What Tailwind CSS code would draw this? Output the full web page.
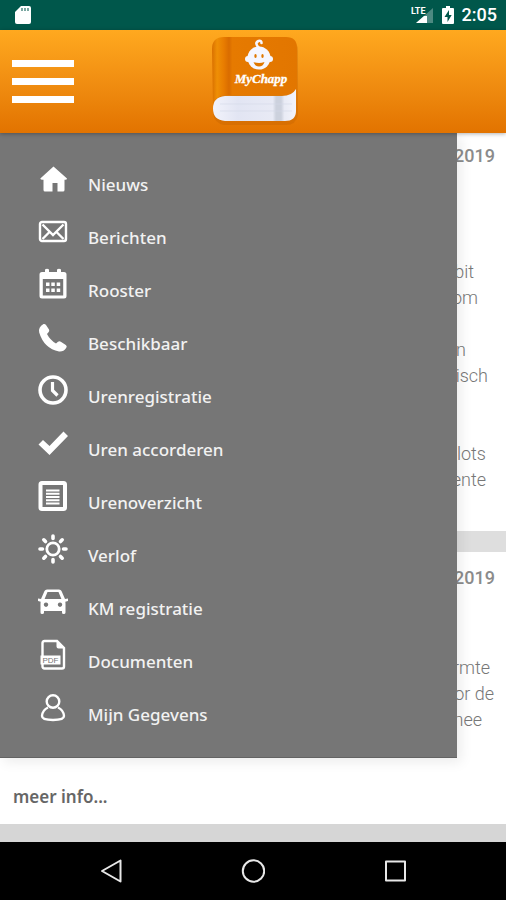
<!DOCTYPE html>
<html lang="nl">
<head>
<meta charset="utf-8">
<meta name="viewport" content="width=device-width, initial-scale=1">
<title>MyChapp</title>
<script src="https://cdn.jsdelivr.net/npm/@tailwindcss/browser@4"></script>
</head>
<body class="flex min-h-screen flex-col bg-[#d6d6d6] font-['Noto_Sans',sans-serif]">

<!-- Status bar -->
<div class="flex h-[30px] items-center justify-between bg-[#00574b] pr-[9px] pl-[14px] text-white">
  <svg class="h-5 w-[18px]" viewBox="0 0 18 20" aria-hidden="true"><path fill="#fff" d="M7 1h8q2 0 2 2v14q0 2-2 2H3q-2 0-2-2V7z"/><path stroke="#00574b" stroke-width="1.6" stroke-opacity=".65" d="M8 3v3M11 3v3M14 3v3"/></svg>
  <div class="flex items-center">
    <svg class="h-5 w-6" viewBox="0 0 24 20" aria-hidden="true">
      <path fill="#fff" fill-opacity=".3" d="M22 3v15H5z"/>
      <path fill="#fff" d="M16 8v10H5l8-7h3z"/>
      <text x="0" y="9" fill="#fff" font-family="Roboto, sans-serif" font-size="9" font-weight="700">LTE</text>
    </svg>
    <svg class="ml-[7px] h-5 w-3" viewBox="0 0 12 20" aria-hidden="true"><path fill="#fff" d="M4 1h4v2h3q1 0 1 1v14q0 1-1 1H1q-1 0-1-1V4q0-1 1-1h3z"/><path fill="#00574b" d="M7 5l-4.500 7H5.500v5L9.700 10H7z"/></svg>
    <span class="ml-2 font-[Roboto,sans-serif] text-[18px] leading-6 font-medium">2:05</span>
  </div>
</div>

<!-- App header -->
<header class="relative z-20 grid h-[103px] grid-cols-3 items-center bg-linear-to-b from-[#ffa91f] to-[#e27300] pr-2 pl-3 shadow-[0_1px_4px_rgba(0,0,0,0.3)]">
  <button type="button" aria-label="Menu" class="flex w-[62px] flex-col gap-[11px]">
    <span class="h-[7px] w-full bg-white"></span>
    <span class="h-[7px] w-full bg-white"></span>
    <span class="h-[7px] w-full bg-white"></span>
  </button>
  <svg class="h-[94px] w-[90px] justify-self-center" viewBox="0 0 90 94" role="img" aria-label="MyChapp">
    <defs>
      <linearGradient id="cover"><stop offset="0" stop-color="#d97000"/><stop offset=".06" stop-color="#ef8f05"/><stop offset=".14" stop-color="#e87c00"/><stop offset=".2" stop-color="#d96c00"/><stop offset=".24" stop-color="#e67a00"/><stop offset="1" stop-color="#e27600"/></linearGradient>
      <linearGradient id="pages"><stop offset="0" stop-color="#f2f3fb"/><stop offset=".3" stop-color="#e2e5f3"/><stop offset=".72" stop-color="#e8eaf5"/><stop offset=".76" stop-color="#ccd1dd"/><stop offset=".82" stop-color="#ccd1dd"/><stop offset=".86" stop-color="#e9ebf5"/><stop offset="1" stop-color="#f3f4fb"/></linearGradient>
    </defs>
    <path fill="#b85c00" fill-opacity=".3" d="M3 18Q3 6 14 4H78Q88 6 88 16V80Q86 90 76 90H14Q4 88 3 78z"/>
    <g transform="translate(0 -2)">
      <path fill="url(#cover)" d="M2 16Q2 4 14 4H76Q87 4 87 15V56Q85 62 76 62H14Q5 63 3 74z"/>
      <path fill="url(#pages)" d="M15 63H72Q82 63 86 56V78Q86 88 75 88H15Q3 87 3 75.500 3 64 15 63z"/>
      <path fill="none" stroke="#d5d9e7" stroke-width=".6" d="M10 71H82M10 78H82"/>
      <circle cx="49" cy="25" r="11.500" fill="#f5f6ff"/><circle cx="38" cy="26" r="3" fill="#f5f6ff"/><circle cx="60" cy="26" r="3" fill="#f5f6ff"/>
      <path fill="none" stroke="#f5f6ff" stroke-width="2.600" stroke-linecap="round" d="M49 15q-5-5-.5-7 3-1 3 2"/>
      <ellipse cx="45.500" cy="23" rx="1.200" ry="2" fill="#e07800"/><ellipse cx="52.500" cy="23" rx="1.200" ry="2" fill="#e07800"/>
      <path fill="#e07800" d="M43.500 29q5.500 2 11 0-1.500 4.500-5.500 4.500T43.500 29z"/>
      <text x="51" y="50" fill="#fff" stroke="#fff" stroke-width=".3" text-anchor="middle" font-family="Liberation Serif, serif" font-size="13" font-weight="700" font-style="italic">MyChapp</text>
    </g>
  </svg>
</header>

<main class="relative flex flex-1 flex-col">
  <!-- News feed -->
  <article class="bg-white pt-[10px] pb-[38px] text-right font-[Roboto,sans-serif] text-[18px] leading-[26px] font-light text-[#777]">
    <p class="pr-[11px] font-medium text-[#8b8b8b]">2019</p>
    <div class="mt-[90px]">
      <p class="pr-8">bit</p>
      <p class="pr-7">om</p>
      <p class="h-[26px]"></p>
      <p class="pr-10">n</p>
      <p class="pr-[18px]">isch</p>
      <p class="h-[52px]"></p>
      <p class="pr-5">lots</p>
      <p class="pr-5">ente</p>
    </div>
  </article>
  <div class="h-[21px] bg-[#dedede]"></div>
  <article class="bg-white pt-[13px] pb-[14px] text-right font-[Roboto,sans-serif] text-[18px] leading-[26px] font-light text-[#777]">
    <p class="pr-[11px] font-medium text-[#8b8b8b]">2019</p>
    <div class="mt-16">
      <p class="pr-4">rmte</p>
      <p class="pr-3">or de</p>
      <p class="pr-6">nee</p>
    </div>
    <p class="mt-[51px] pl-[13px] text-left font-['Noto_Sans',sans-serif] text-[17px] font-semibold text-[#666]"><a href="#">meer info...</a></p>
  </article>

  <!-- Slide-out menu -->
  <nav class="absolute top-0 left-0 w-[calc(100%-49px)] border-b border-[#636363] bg-[#767676] pt-[31px] pb-[10px] pl-[38px] text-[17px] leading-6 font-medium text-[#f2f2f2] shadow-[4px_4px_12px_rgba(0,0,0,0.08)]">
    <ul>
      <li><a href="#" class="flex h-[53px] items-start gap-5"><svg class="size-[30px] overflow-visible" viewBox="0 0 30 30" fill="#fff" aria-hidden="true"><path d="M15.500 2.500 29 14.500q0 1.500-2.500 1.200V26q0 1.500-1.500 1.500h-5.500V19h-5v8.500H7Q5.500 27.500 5.500 26V15.700Q2.500 16 2.300 14.500z"/></svg><span class="mt-[9px]">Nieuws</span></a></li>
      <li><a href="#" class="flex h-[53px] items-start gap-5"><svg class="size-[30px] overflow-visible" viewBox="0 0 30 30" fill="none" stroke="#fff" stroke-width="2.400" aria-hidden="true"><rect x="2" y="5" width="26" height="19" rx="2"/><path d="M4.500 7.500 15 18 25.500 7.500M4.500 22l7-7M25.500 22l-7-7"/></svg><span class="mt-[9px]">Berichten</span></a></li>
      <li><a href="#" class="flex h-[53px] items-start gap-5"><svg class="size-[30px] overflow-visible" viewBox="0 0 30 30" fill="#fff" aria-hidden="true"><path fill-rule="evenodd" d="M4 2h3V-.500Q9-2 11-.500V2h8V-.500Q21-2 23-.500V2h3q2.500 0 2.500 2.500v21.500q0 2.500-2.500 2.500H4q-2.500 0-2.500-2.500V4.500Q1.500 2 4 2zM4.800 9v16.500h20.400V9z"/><path d="M8 12.500h3.500V16H8zM13.300 12.500h3.500V16h-3.500zM18.700 12.500h3.500V16h-3.500zM8 18.500h3.500V22H8zM13.300 18.500h3.500V22h-3.500zM18.700 18.500h3.500V22h-3.500z"/></svg><span class="mt-[9px]">Rooster</span></a></li>
      <li><a href="#" class="flex h-[53px] items-start gap-5"><svg class="size-[30px] overflow-visible" viewBox="0 0 30 30" fill="#fff" aria-hidden="true"><path d="M5.500 1Q7 .5 8 2l3 4.500q.8 1.500-.5 2.800L9 11q3 6 9 9.500l2-1.700q1.300-1 2.800-.1l5 3.300q1.600 1.200.5 2.700Q25.500 29 21 28.500 6 25.500 1.200 9.500 0 4 5.500 1z"/></svg><span class="mt-[9px]">Beschikbaar</span></a></li>
      <li><a href="#" class="flex h-[53px] items-start gap-5"><svg class="size-[30px] overflow-visible" viewBox="0 0 30 30" fill="none" stroke="#fff" aria-hidden="true"><circle cx="15" cy="14" r="13" stroke-width="3.600"/><path stroke-width="3.200" d="M14.500 6v8.500l5 5"/></svg><span class="mt-[9px]">Urenregistratie</span></a></li>
      <li><a href="#" class="flex h-[53px] items-start gap-5"><svg class="size-[30px] overflow-visible" viewBox="0 0 30 30" fill="#fff" aria-hidden="true"><path d="M.5 15.500 5 11l6.500 6L25.500 2.500 30 7 11.500 26z"/></svg><span class="mt-[9px]">Uren accorderen</span></a></li>
      <li><a href="#" class="flex h-[53px] items-start gap-5"><svg class="size-[30px] overflow-visible" viewBox="0 0 30 30" fill="none" stroke="#fff" aria-hidden="true"><rect x="2.500" y="1" width="24.500" height="26" rx="1.500" stroke-width="4"/><path stroke-width="2" d="M8 8.500h13.500M8 11.800h13.500M8 15h13.500M8 18.200h13.500M8 21.500h13.500"/></svg><span class="mt-[9px]">Urenoverzicht</span></a></li>
      <li><a href="#" class="flex h-[53px] items-start gap-5"><svg class="size-[30px] overflow-visible" viewBox="0 0 30 30" fill="none" stroke="#fff" stroke-linecap="round" aria-hidden="true"><g transform="translate(0 -1)"><circle cx="15" cy="15" r="6.200" stroke-width="2.800"/><path stroke-width="3.600" d="M15 2v2.500M15 25.500V28M2 15h2.500M25.500 15H28M5.800 5.800l1.700 1.700M22.500 22.500l1.700 1.700M5.800 24.200l1.700-1.700M22.500 7.500l1.700-1.700"/></g></svg><span class="mt-[9px]">Verlof</span></a></li>
      <li><a href="#" class="flex h-[53px] items-start gap-5"><svg class="size-[30px] overflow-visible" viewBox="0 0 30 30" fill="#fff" aria-hidden="true"><path transform="translate(0 -1)" fill-rule="evenodd" d="M9 2.500h12q1.800 0 2.500 1.500l3.500 8 3-.5v2.500l-2.700.8q.2 1 .2 2.200v8.500q0 1.500-1.800 1.500T24 25.500V24H6v1.500Q6 27 4.200 27t-1.700-1.500V17q0-1.200.2-2.200L0 14v-2.500l3 .5 3.500-8Q7.200 2.500 9 2.500zM9.500 5 6.600 12h16.800L20.500 5zM8 15.500a2.200 2.200 0 1 0 .01 0zM22 15.500a2.200 2.200 0 1 0 .01 0z"/></svg><span class="mt-[9px]">KM registratie</span></a></li>
      <li><a href="#" class="flex h-[53px] items-start gap-5"><svg class="size-[30px] overflow-visible" viewBox="0 0 30 30" fill="none" aria-hidden="true"><path stroke="#fff" stroke-width="2.400" d="M4.500 15V2q0-2 2-2H19l7 7v18.500q0 2-2 2H6.500q-2 0-2-2V22"/><path fill="#fff" d="M18.500 0V5.500q0 2 2 2H26zM2.500 14.500H22.500v9H2.500z"/><text x="4.500" y="21.800" fill="#767676" font-family="Liberation Sans, sans-serif" font-size="8">PDF</text></svg><span class="mt-[9px]">Documenten</span></a></li>
      <li><a href="#" class="flex h-[53px] items-start gap-5"><svg class="size-[30px] overflow-visible" viewBox="0 0 30 30" fill="none" stroke="#fff" stroke-width="2.400" aria-hidden="true"><circle cx="15" cy="7.500" r="6.300"/><path d="M10 13.500q-5.500 2.500-6 8.500 0 4 11 4t11-4q-.5-6-6-8.500"/></svg><span class="mt-[9px]">Mijn Gegevens</span></a></li>
    </ul>
  </nav>
</main>

<!-- System navigation -->
<footer class="grid h-[58px] grid-cols-3 items-center justify-items-center bg-black px-10">
  <button type="button" aria-label="Terug"><svg class="size-6" viewBox="0 0 24 24" fill="none" stroke="#e8e8e8" stroke-width="2" stroke-linejoin="round" aria-hidden="true"><path d="M21.500 1.500v21L3 12z"/></svg></button>
  <button type="button" aria-label="Start"><svg class="size-6" viewBox="0 0 24 24" fill="none" stroke="#e8e8e8" stroke-width="2" aria-hidden="true"><circle cx="12.500" cy="12" r="10.700"/></svg></button>
  <button type="button" aria-label="Recente apps"><svg class="size-6" viewBox="0 0 24 24" fill="none" stroke="#e8e8e8" stroke-width="2" stroke-linejoin="round" aria-hidden="true"><rect x="3" y="2.500" width="19" height="19"/></svg></button>
</footer>
</body>
</html>
